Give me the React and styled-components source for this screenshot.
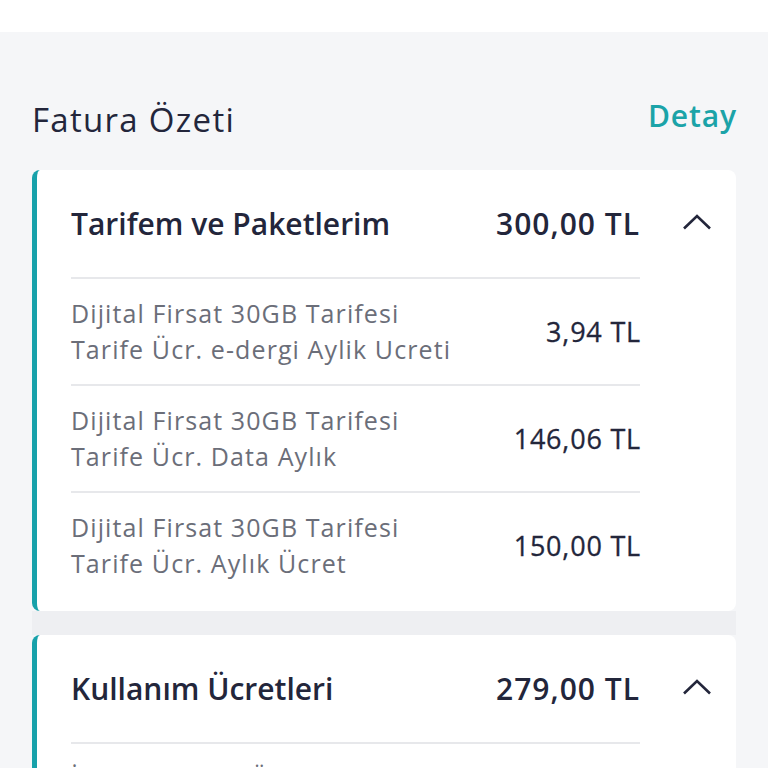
import styled, { createGlobalStyle } from "styled-components";

const GlobalStyle = createGlobalStyle`
  body {
    margin: 0;
    background: #f5f6f8;
    font-family: "Open Sans", "Liberation Sans", sans-serif;
    color: #23263b;
  }
`;

const sections = [
  {
    title: "Tarifem ve Paketlerim",
    total: "300,00 TL",
    items: [
      { name: "Dijital Firsat 30GB Tarifesi", detail: "Tarife Ücr. e-dergi Aylik Ucreti", price: "3,94 TL" },
      { name: "Dijital Firsat 30GB Tarifesi", detail: "Tarife Ücr. Data Aylık", price: "146,06 TL" },
      { name: "Dijital Firsat 30GB Tarifesi", detail: "Tarife Ücr. Aylık Ücret", price: "150,00 TL" },
    ],
  },
  {
    title: "Kullanım Ücretleri",
    total: "279,00 TL",
    items: [
      { name: "İnternet Aşım Ücreti", detail: "Yurtiçi Kullanım", price: "279,00 TL" },
    ],
  },
];

function Chevron() {
  return (
    <ChevronIcon viewBox="0 0 30 16" width="30" height="16">
      <polyline points="2,14.5 15,2 28,14.5" fill="none" stroke="#23263b" strokeWidth="2.6" />
    </ChevronIcon>
  );
}

function App() {
  return (
    <>
      <GlobalStyle />
      <TopBar />
      <Content>
        <SummaryHeader>
          <Title>Fatura Özeti</Title>
          <DetailLink>Detay</DetailLink>
        </SummaryHeader>
        {sections.map((s, i) => (
          <div key={s.title}>
            {i > 0 && <Separator />}
            <Card>
              <CardHeader>
                <SectionTitle>{s.title}</SectionTitle>
                <SectionTotal>{s.total}</SectionTotal>
                <Chevron />
              </CardHeader>
              <ItemList>
                {s.items.map((it, j) => (
                  <Item key={j}>
                    <ItemText>
                      <span>{it.name}</span>
                      <span>{it.detail}</span>
                    </ItemText>
                    <ItemPrice>{it.price}</ItemPrice>
                  </Item>
                ))}
              </ItemList>
            </Card>
          </div>
        ))}
      </Content>
    </>
  );
}

const TopBar = styled.div`
  height: 32px;
  background: #ffffff;
`;

const Content = styled.main`
  padding: 0 32px;
`;

const SummaryHeader = styled.div`
  display: flex;
  justify-content: space-between;
  align-items: flex-start;
  padding-top: 68px;
  margin-bottom: 30px;
`;

const Title = styled.h1`
  margin: 0;
  font-size: 33px;
  line-height: 40px;
  font-weight: 400;
  letter-spacing: 1.3px;
  color: #23263b;
`;

const DetailLink = styled.a`
  margin-top: -4px;
  margin-right: -1px;
  font-size: 30px;
  line-height: 40px;
  font-weight: 600;
  letter-spacing: 0.9px;
  color: #1ba3a8;
`;

const Separator = styled.div`
  height: 24px;
  background: #eeeff2;
`;

const Card = styled.section`
  background: #ffffff;
  border-left: 5px solid #17a1aa;
  border-radius: 8px;
  padding: 0 0 13px 34px;
`;

const CardHeader = styled.div`
  display: flex;
  align-items: center;
  height: 107px;
  padding-right: 24px;
`;

const SectionTitle = styled.h2`
  flex: 1;
  margin: 0;
  font-size: 30px;
  font-weight: 600;
  letter-spacing: 0;
  color: #23263b;
`;

const SectionTotal = styled.span`
  margin-right: -1px;
  font-size: 30px;
  font-weight: 600;
  letter-spacing: 1px;
  color: #23263b;
`;

const ChevronIcon = styled.svg`
  margin-left: 43px;
  margin-top: -4px;
  flex-shrink: 0;
`;

const ItemList = styled.ul`
  list-style: none;
  margin: 0 96px 0 0;
  padding: 0;
`;

const Item = styled.li`
  display: flex;
  align-items: center;
  justify-content: space-between;
  border-top: 2px solid #e7e8eb;
  padding: 16px 0 17px;
`;

const ItemText = styled.div`
  display: flex;
  flex-direction: column;
  font-size: 25px;
  line-height: 36px;
  letter-spacing: 1.1px;
  color: #6b6e79;
`;

const ItemPrice = styled.span`
  margin-right: -1px;
  font-size: 27px;
  font-weight: 500;
  letter-spacing: 0.8px;
  color: #23263b;
  -webkit-text-stroke: 0.3px #23263b;
`;

export default App;
